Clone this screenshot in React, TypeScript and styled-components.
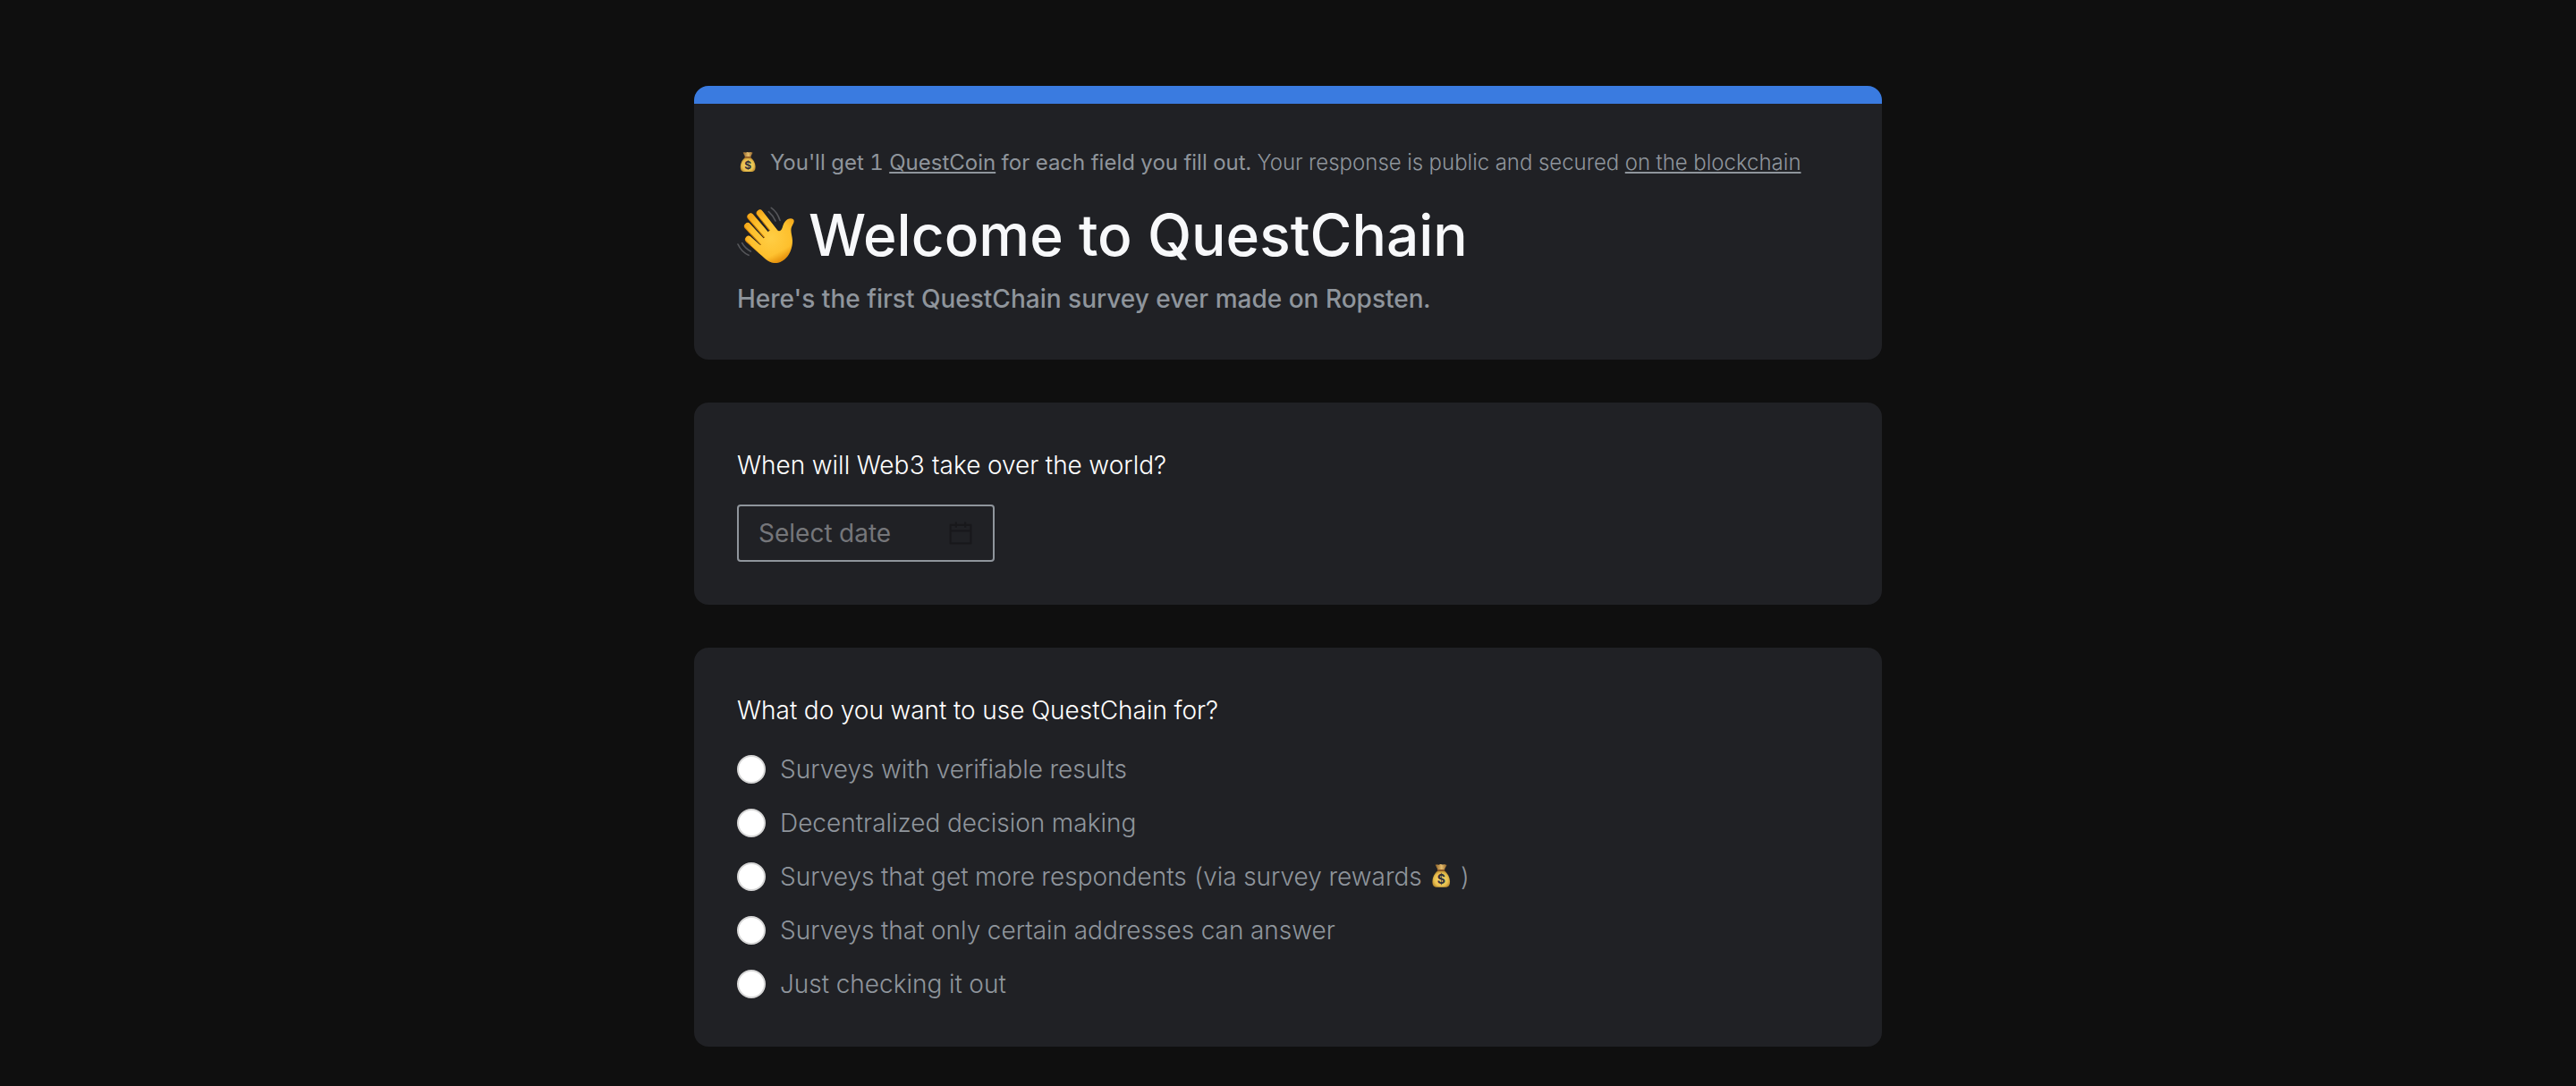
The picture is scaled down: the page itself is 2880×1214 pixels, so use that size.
import React, { useState } from "react";
import styled, { createGlobalStyle } from "styled-components";

const color = {
  page: "#0f0f0f",
  card: "#202125",
  accent: "#3a7be0",
  heading: "#f7f8fa",
  question: "#ffffff",
  muted: "#8f959c",
  placeholder: "#75767a",
  radioEdge: "#d6d6d6",
};

const GlobalStyle = createGlobalStyle`
  *, *::before, *::after { box-sizing: border-box; }
  body {
    margin: 0;
    background: ${color.page};
    color: ${color.heading};
    font-family: Inter, "Liberation Sans", sans-serif;
    font-size: 28px;
    font-weight: 300;
    font-variant-numeric: tabular-nums;
    line-height: 44px;
  }
`;

const Page = styled.main`
  display: flex;
  flex-direction: column;
  gap: 48px;
  max-width: 1424px;
  margin: 0 auto;
  padding: 96px 48px 44px;
`;

const Card = styled.section<{ $accent?: boolean }>`
  overflow: hidden;
  padding: 48px;
  border-radius: 16px;
  background: ${color.card};
  ${(p) => p.$accent && `border-top: 20px solid ${color.accent};`}
`;

const Notice = styled.p`
  margin: 0 0 22px;
  color: ${color.muted};
  font-size: 24px;
  line-height: 36px;
  white-space: pre-wrap;
`;

const Reward = styled.strong`
  font-weight: 400;
`;

const TextLink = styled.a`
  color: inherit;
  text-decoration: underline;
  text-decoration-thickness: 2px;
  text-decoration-skip-ink: none;
  text-underline-offset: 2px;
`;

const Title = styled.h1`
  display: flex;
  align-items: center;
  gap: 16px;
  margin: 0 0 10px;
  font-size: 64px;
  font-weight: 500;
  line-height: 82px;
`;

const Subtitle = styled.p`
  margin: 0;
  color: ${color.muted};
  font-weight: 500;
  line-height: 40px;
`;

const Question = styled.label`
  display: block;
  margin-bottom: 22px;
  color: ${color.question};
`;

const DateField = styled.div`
  display: flex;
  align-items: center;
  width: 288px;
  height: 64px;
  padding: 0 22px;
  border: 2px solid ${color.muted};
  border-radius: 4px;
`;

const DateInput = styled.input`
  flex: 1;
  min-width: 0;
  padding: 0;
  border: 0;
  outline: 0;
  background: transparent;
  color: ${color.heading};
  font: inherit;
  font-weight: 400;
  &::placeholder {
    color: ${color.placeholder};
    opacity: 1;
  }
`;

const CalendarSvg = styled.svg`
  flex: none;
  width: 28px;
  height: 28px;
  fill: rgba(0, 0, 0, 0.25);
`;

const Choices = styled.fieldset`
  display: flex;
  flex-direction: column;
  gap: 16px;
  min-width: 0;
  margin: 0;
  padding: 0;
  border: 0;
`;

const Legend = styled.legend`
  margin-bottom: 22px;
  padding: 0;
  color: ${color.question};
`;

const Choice = styled.label`
  display: flex;
  align-items: center;
  gap: 16px;
  color: ${color.muted};
`;

const Radio = styled.input`
  flex: none;
  width: 32px;
  height: 32px;
  margin: 0;
  appearance: none;
  border: 2px solid ${color.radioEdge};
  border-radius: 50%;
  background: #ffffff;
  &:checked {
    border: 10px solid ${color.accent};
  }
`;

const BagSvg = styled.svg`
  width: 1em;
  height: 1em;
  vertical-align: -3px;
`;

const WaveSvg = styled.svg`
  flex: none;
  width: 64px;
  height: 64px;
`;

function MoneyBag() {
  return (
    <BagSvg viewBox="0 0 24 24" role="img" aria-label="Money bag">
      <defs>
        <radialGradient id="bagBody" cx="0.5" cy="0.55" r="0.6">
          <stop offset="0" stopColor="#f6dc72" />
          <stop offset="0.65" stopColor="#e8bf4e" />
          <stop offset="1" stopColor="#a87824" />
        </radialGradient>
        <linearGradient id="bagTop" x1="0" x2="1">
          <stop offset="0" stopColor="#8c5f26" />
          <stop offset="0.55" stopColor="#e6bd6c" />
          <stop offset="1" stopColor="#8c5f26" />
        </linearGradient>
      </defs>
      <path d="M6.6 1.6C8.2.8 9.4 1.9 10.6 1.2c1.2-.7 2.4.4 3.6 0 1.2-.4 2.2-.2 3.4.5L15 6.6H9.2Z" fill="url(#bagTop)" />
      <path d="M9.2 7h5.8c3.2 2.3 5.6 6.3 5.6 10.8 0 3.7-1.6 5.2-4.6 5.2H8.4c-3 0-4.6-1.5-4.6-5.2C3.8 13.3 6 9.3 9.2 7Z" fill="url(#bagBody)" />
      <path d="M9 6.7h6.2" stroke="#8f5826" strokeWidth="1.4" strokeLinecap="round" />
      <text x="12.2" y="20" textAnchor="middle" fontSize="12" fontWeight="700" fill="#34323a">$</text>
    </BagSvg>
  );
}

function WavingHand() {
  return (
    <WaveSvg viewBox="27 30 192 192" role="img" aria-label="Waving hand">
      <defs>
        <radialGradient id="skin" gradientUnits="userSpaceOnUse" cx="140" cy="135" r="95">
          <stop offset="0" stopColor="#ffce45" />
          <stop offset="0.7" stopColor="#fec02d" />
          <stop offset="1" stopColor="#f3a91c" />
        </radialGradient>
        <linearGradient id="palmShade" gradientUnits="userSpaceOnUse" x1="140" y1="130" x2="185" y2="215">
          <stop offset="0.6" stopColor="#e08400" stopOpacity="0" />
          <stop offset="1" stopColor="#d97c00" stopOpacity="0.8" />
        </linearGradient>
      </defs>
      <g stroke="#dc8b0a" strokeWidth="22" strokeLinecap="round" fill="none">
        <path d="M103 52 155 118M72 64 130 132M62 96 115 152M65 140 110 180" />
      </g>
      <g stroke="url(#skin)" strokeWidth="20" strokeLinecap="round" fill="none">
        <path d="M104 50.5 156 117M73 62 132 131M63 94 116 151M66 138 112 179" />
      </g>
      <path
        d="M107 158 117 134 135 110 150 96C158 106 164 113 169 112C181 110 178 91 188 80C196 69 210 67 216 73C222 80 214 88 210 98C205 112 212 126 213 143C214 183 187 219 154 219C137 219 124 208 108 193L72 158Z"
        fill="url(#skin)"
      />
      <path
        d="M210 98C205 112 212 126 213 143C214 183 187 219 154 219C137 219 124 208 108 193L72 158 150 120Z"
        fill="url(#palmShade)"
      />
      <g stroke="#b87709" strokeWidth="3" strokeLinecap="round" fill="none">
        <path d="M108 74 137 110M83 92 119 134M75 124 107 158" />
      </g>
      <g stroke="#55565a" strokeWidth="5" strokeLinecap="round" fill="none">
        <path d="M142 34Q162 48 171 76M133 47Q148 60 156 78M30 156Q42 182 66 193M44 152Q54 170 73 180" />
      </g>
    </WaveSvg>
  );
}

function CalendarIcon() {
  return (
    <CalendarSvg viewBox="64 64 896 896" aria-hidden="true">
      <path d="M880 184H712v-64c0-4.4-3.6-8-8-8h-56c-4.4 0-8 3.6-8 8v64H384v-64c0-4.4-3.6-8-8-8h-56c-4.4 0-8 3.6-8 8v64H144c-17.7 0-32 14.3-32 32v664c0 17.7 14.3 32 32 32h736c17.7 0 32-14.3 32-32V216c0-17.7-14.3-32-32-32zm-40 656H184V460h656v380zM184 392V256h128v48c0 4.4 3.6 8 8 8h56c4.4 0 8-3.6 8-8v-48h256v48c0 4.4 3.6 8 8 8h56c4.4 0 8-3.6 8-8v-48h128v136H184z" />
    </CalendarSvg>
  );
}

const options: { id: string; label: React.ReactNode }[] = [
  { id: "verifiable", label: "Surveys with verifiable results" },
  { id: "decisions", label: "Decentralized decision making" },
  {
    id: "rewards",
    label: (
      <>
        Surveys that get more respondents (via survey rewards <MoneyBag /> )
      </>
    ),
  },
  { id: "addresses", label: "Surveys that only certain addresses can answer" },
  { id: "checking", label: "Just checking it out" },
];

export default function App() {
  const [date, setDate] = useState("");
  const [choice, setChoice] = useState("");

  return (
    <>
      <GlobalStyle />
      <Page>
        <Card $accent>
          <Notice>
            <MoneyBag />
            {"  "}
            <Reward>
              You'll get 1 <TextLink href="#questcoin">QuestCoin</TextLink> for each field you fill out.
            </Reward>{" "}
            Your response is public and secured <TextLink href="#blockchain">on the blockchain</TextLink>
          </Notice>
          <Title>
            <WavingHand />
            Welcome to QuestChain
          </Title>
          <Subtitle>Here's the first QuestChain survey ever made on Ropsten.</Subtitle>
        </Card>

        <Card>
          <Question htmlFor="takeover-date">When will Web3 take over the world?</Question>
          <DateField>
            <DateInput
              id="takeover-date"
              type="text"
              placeholder="Select date"
              value={date}
              onChange={(e) => setDate(e.target.value)}
            />
            <CalendarIcon />
          </DateField>
        </Card>

        <Card>
          <Choices>
            <Legend>What do you want to use QuestChain for?</Legend>
            {options.map((o) => (
              <Choice key={o.id}>
                <Radio
                  type="radio"
                  name="usage"
                  value={o.id}
                  checked={choice === o.id}
                  onChange={() => setChoice(o.id)}
                />
                <span>{o.label}</span>
              </Choice>
            ))}
          </Choices>
        </Card>
      </Page>
    </>
  );
}
